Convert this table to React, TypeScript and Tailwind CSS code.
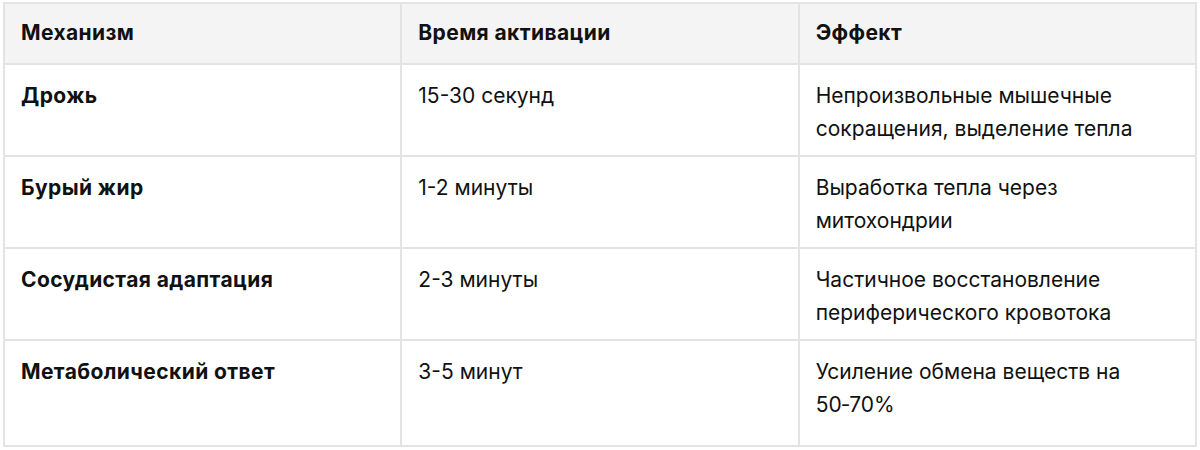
const rows = [
  { mech: 'Дрожь', time: '15-30 секунд', effect: 'Непроизвольные мышечные сокращения, выделение тепла' },
  { mech: 'Бурый жир', time: '1-2 минуты', effect: 'Выработка тепла через митохондрии' },
  { mech: 'Сосудистая адаптация', time: '2-3 минуты', effect: 'Частичное восстановление периферического кровотока' },
  { mech: 'Метаболический ответ', time: '3-5 минут', effect: 'Усиление обмена веществ на 50-70%' },
];

export default function App() {
  return (
    <div className="bg-white px-[3px] pt-[2px] font-['Inter',sans-serif] text-[21px] text-[#111]">
      <table className="w-full table-fixed border-collapse border-2 border-[#e3e3e3]">
        <thead>
          <tr className="bg-[#f4f4f4]">
            <th className="border-2 border-[#e3e3e3] px-4 pt-[11px] pb-[13px] text-left font-bold tracking-[0.4px] leading-[35px]">Механизм</th>
            <th className="border-2 border-[#e3e3e3] px-4 pt-[11px] pb-[13px] text-left font-bold tracking-[0.4px] leading-[35px]">Время активации</th>
            <th className="border-2 border-[#e3e3e3] px-4 pt-[11px] pb-[13px] text-left font-bold tracking-[0.4px] leading-[35px]">Эффект</th>
          </tr>
        </thead>
        <tbody>
          {rows.map((r, i) => {
            const pad = i === rows.length - 1 ? 'pt-[14px] pb-[24px]' : 'pt-[14px] pb-[10px]';
            return (
              <tr key={r.mech}>
                <td className={`border-2 border-[#e3e3e3] px-4 ${pad} align-top font-bold tracking-[0.4px] leading-[33px]`}>{r.mech}</td>
                <td className={`border-2 border-[#e3e3e3] px-4 ${pad} align-top leading-[33px]`}>{r.time}</td>
                <td className={`border-2 border-[#e3e3e3] px-4 ${pad} align-top leading-[33px]`}>
                  {r.effect.replace('-', '\u2011')}
                </td>
              </tr>
            );
          })}
        </tbody>
      </table>
    </div>
  );
}
